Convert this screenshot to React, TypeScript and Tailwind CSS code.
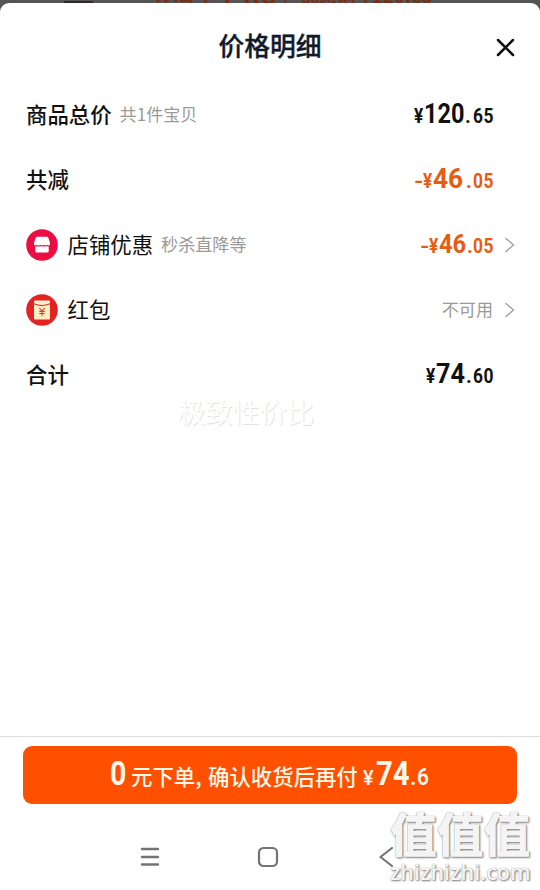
import React from 'react';

const CJK = "font-['Noto_Sans_CJK_SC',sans-serif]";

function Amount({ minus, whole, cents, color, wholeClass, dotClass }: { minus?: boolean; whole: string; cents: string; color: string; wholeClass: string; dotClass: string }) {
  return (
    <div className={`flex h-[40px] items-baseline whitespace-nowrap font-['Roboto','Liberation_Sans',sans-serif] font-bold leading-[40px] ${color}`}>
      {minus && <span className="w-[9px] origin-left scale-x-[1.2] text-[20px]">-</span>}
      <span className="w-[10px] origin-left scale-x-[0.88] text-[19.5px]">¥</span>
      <span className={`origin-left ${wholeClass}`}>{whole}</span>
      <span className={`text-[20px] font-bold ${dotClass}`}>.</span>
      <span className="w-[20px] origin-left scale-x-[0.87] text-[20px] font-bold tracking-[0.5px]">{cents}</span>
    </div>
  );
}

function Chevron() {
  return (
    <svg className="h-4 w-3" viewBox="0 0 12 16" fill="none" stroke="#a6a6a6" strokeWidth="1.6" strokeLinecap="round" strokeLinejoin="round">
      <path d="M2 1.5 9.5 8 2 14.5" />
    </svg>
  );
}

function Row({ icon, label, note, bold, children, chevron }: { icon?: React.ReactNode; label: string; note?: string; bold?: boolean; children: React.ReactNode; chevron?: boolean }) {
  return (
    <div className="flex h-[65px] items-center pl-[26px]">
      {icon && <span className="mr-[9.5px] flex">{icon}</span>}
      <span className={`pb-[1px] text-[21.4px] leading-[30px] text-[#111] ${bold ? 'font-medium' : 'font-normal'}`}>{label}</span>
      {note && <span className="ml-2 pb-[2px] text-[17.1px] font-normal leading-[30px] text-[#9a9a9a]">{note}</span>}
      <div className="ml-auto flex items-center pb-[1px]">{children}</div>
      <span className="ml-[11px] flex w-[36px]">{chevron && <Chevron />}</span>
    </div>
  );
}

function ShopIcon() {
  return (
    <svg className="h-8 w-8" viewBox="0 0 32 32">
      <circle cx="16" cy="16" r="15.8" fill="#ec0e43" />
      <path d="M11.2 7.8h9.6q1.200 0 1.600 1.200l1.600 4.800v1.700q-1.500 1.800-3 .2q-1.500 1.600-3.300 0q-1.700 1.600-3.400 0q-1.800 1.600-3.300 0q-1.500 1.600-3-.2V13.800l1.600-4.800q.4-1.200 1.600-1.200z" fill="#fff" />
      <path d="M9.300 17.500q1.200.2 2.200-.5q1.500 1.200 3 0q1.500 1.200 3 0q1.500 1.200 3 0q1 .7 2.200.5V22q0 1.500-1.500 1.500H10.800Q9.300 23.500 9.300 22z" fill="#fff" />
    </svg>
  );
}

function RedPacketIcon() {
  return (
    <svg className="h-8 w-8" viewBox="0 0 32 32">
      <circle cx="16" cy="16" r="15.8" fill="#e32322" />
      <path d="M9 6.500h14q1 0 1 1v1.700q-8 3.600-16 0V7.500q0-1 1-1z" fill="#fff0cf" />
      <path d="M8 10.300q8 3.400 16 0V24.500q0 1-1 1H9q-1 0-1-1z" fill="#ffebc4" />
      <path d="m13.400 14 2.600 3.200 2.600-3.200M13.300 17.400h5.400M13.300 19.500h5.400M16 17.200v5" fill="none" stroke="#c94825" strokeWidth="1.100" />
    </svg>
  );
}

export default function App() {
  return (
    <div className={`relative flex h-[890px] w-[540px] flex-col overflow-hidden bg-[#555] ${CJK}`}>
      <div className="relative h-[3px] shrink-0 overflow-hidden text-[#7c2d12]">
        <span className="absolute left-[154px] top-[-19px] whitespace-nowrap text-[20px] font-bold leading-6">券后</span>
        <span className="absolute left-[200px] top-[-17px] whitespace-nowrap text-[20px] font-bold leading-6">¥</span>
        <span className="absolute left-[220px] top-[-18px] whitespace-nowrap text-[27px] font-bold leading-6">74.6</span>
        <span className="absolute left-[283px] top-[-18px] whitespace-nowrap text-[18px] font-medium leading-6">|</span>
        <span className="absolute left-[300px] top-[-17px] whitespace-nowrap text-[18.8px] font-bold leading-6">优惠前 ¥120.65</span>
        <span className="absolute left-[64px] top-[1px] h-[2px] w-[29px] bg-[#332b2b]" />
      </div>
      <main className="flex flex-1 flex-col rounded-t-[9px] bg-white">
        <header className="relative flex h-[79px] items-center justify-center pt-[4px]">
          <h1 className="text-[25.8px] font-medium leading-9 text-[#111a2c] [-webkit-text-stroke:0.3px_#111a2c]">价格明细</h1>
          <svg className="absolute left-[496px] top-[35px] h-[19px] w-[19px]" viewBox="0 0 19 19" fill="none" stroke="#111" strokeWidth="2.5" strokeLinecap="round">
            <path d="M2 2 17 17M17 2 2 17" />
          </svg>
        </header>
        <section>
          <Row label="商品总价" note="共1件宝贝" bold>
            <Amount whole="120" cents="65" color="text-[#111]" wholeClass="w-[41px] text-[28px] scale-x-[0.84]" dotClass="w-[8px]" />
          </Row>
          <Row label="共减" bold>
            <Amount minus whole="46" cents="05" color="text-[#e85b10]" wholeClass="w-[33px] text-[28px] scale-x-[0.94]" dotClass="w-[7px]" />
          </Row>
          <Row icon={<ShopIcon />} label="店铺优惠" note="秒杀直降等" chevron>
            <Amount minus whole="46" cents="05" color="text-[#e85b10]" wholeClass="w-[28px] text-[26px] scale-x-[0.91]" dotClass="w-[6px]" />
          </Row>
          <Row icon={<RedPacketIcon />} label="红包" chevron>
            <span className="text-[17.1px] font-normal leading-[30px] text-[#9a9a9a]">不可用</span>
          </Row>
          <Row label="合计" bold>
            <Amount whole="74" cents="60" color="text-[#111]" wholeClass="w-[30px] text-[28px] scale-x-[0.9]" dotClass="w-[7px]" />
          </Row>
        </section>
        <p className="ml-[178px] mt-[-16px] text-[27.2px] leading-10 text-white [text-shadow:1px_1px_1px_#e2e2e2]">极致性价比</p>
        <footer className="mt-auto flex h-[154px] flex-col border-t border-[#dedede] pt-[9px]">
          <button className="ml-[23px] flex h-[58px] w-[494px] items-baseline whitespace-nowrap rounded-[9px] bg-[#ff5000] pl-[87px] text-[21.4px] font-medium leading-[56px] text-[#fff7e8]">
            <span className="w-[21px] origin-left scale-x-[0.86] text-left font-['Roboto'] text-[33px] font-bold">0</span>
            <span className="w-[70px] text-left">元下单,</span>
            <span className="ml-[7px] w-[151px] text-left">确认收货后再付</span>
            <span className="ml-[4px] w-[13px] origin-left scale-x-[0.95] text-left font-['Roboto'] text-[21px]">¥</span>
            <span className="w-[34px] origin-left scale-x-[0.89] text-left font-['Roboto'] text-[33px] font-bold">74</span>
            <span className="w-[7px] text-left font-['Roboto'] text-[23px] font-semibold">.</span>
            <span className="origin-left scale-x-[0.9] font-['Roboto'] text-[23px] font-semibold">6</span>
          </button>
          <nav className="flex h-[86px] items-center pl-[140px] pt-[19px]">
            <svg className="h-5 w-5" viewBox="0 0 20 20" stroke="#747474" strokeWidth="2.4" strokeLinecap="round">
              <path d="M2 2h16M2 10h16M2 17.500h16" />
            </svg>
            <svg className="ml-[97px] h-[22px] w-[22px]" viewBox="0 0 22 22" fill="none" stroke="#747474" strokeWidth="2.2">
              <rect x="2" y="2" width="18" height="18" rx="4.500" />
            </svg>
            <svg className="ml-[100px] h-[20px] w-[14px]" viewBox="0 0 14 20" fill="none" stroke="#747474" strokeWidth="2.200" strokeLinecap="round" strokeLinejoin="round">
              <path d="M13 1 1.500 10 13 19" />
            </svg>
          </nav>
        </footer>
      </main>
      <div className="absolute left-[390px] top-[804px] whitespace-nowrap text-[#f4f4f4] [text-shadow:1px_1px_2px_#777,0_0_1px_#999]">
        <div className="text-[46.8px] font-black leading-[56px]">值值值</div>
        <div className="font-['Open_Sans'] text-[21.6px] font-semibold leading-[24px]">zhizhizhi.com</div>
      </div>
    </div>
  );
}
